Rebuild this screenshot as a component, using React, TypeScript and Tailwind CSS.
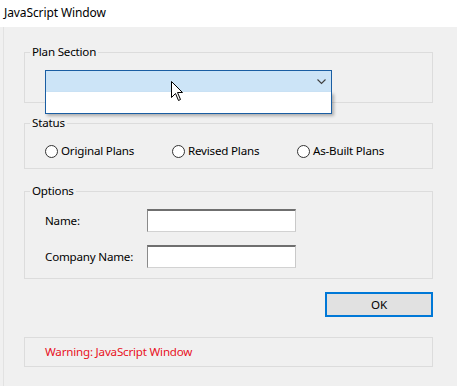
import React from "react";

const radios = [
  { label: "Original Plans", w: "w-[127px]" },
  { label: "Revised Plans", w: "w-[125px]" },
  { label: "As-Built Plans", w: "w-[120px]" },
];

function Radio({ label, w }: { label: string; w: string }) {
  return (
    <label className={`flex items-center ${w}`}>
      <span className="w-[13px] h-[13px] rounded-full border border-[#333333] bg-white" />
      <span className="ml-[3px] leading-[16px]">{label}</span>
    </label>
  );
}

function TextBox() {
  return (
    <div className="w-[149px] h-[23px] bg-white border border-t-2 border-t-[#6f6f6f] border-l-[#8a8a8a] border-r-[#c9c9c9] border-b-[#d2d2d2]" />
  );
}

export default function App() {
  return (
    <div className="relative w-[457px] h-[386px] overflow-hidden bg-[#f0f0f0] font-['Noto_Sans',sans-serif] text-[11.6px] tracking-[-0.2px] text-black">
      <div className="h-[27px] bg-white pl-[4px] leading-[26px] text-[12px] tracking-[-0.1px]">JavaScript Window</div>

      <div className="ml-[3px] border-l border-[#e2e2e2] h-[359px] pl-[20px] pr-[24px] pt-[17px]">
        {/* Plan Section */}
        <fieldset className="border border-[#dcdcdc] pl-[5px] pt-[10px] pb-[8px]">
          <legend className="px-[2px] leading-[16px]">Plan Section</legend>
          <div className="relative ml-[15px] w-[287px] h-[24px] bg-[#cce4f7] border border-[#1a5ea3] border-b-2 flex items-center justify-end pr-[5px]">
            <svg width="9" height="6" viewBox="0 0 9 6" className="mt-[1px]">
              <polyline points="0.5,0.5 4.5,4.5 8.5,0.5" fill="none" stroke="#404040" strokeWidth="1.1" />
            </svg>
            <div className="absolute left-[-1px] right-[-1px] top-full h-[22px] bg-white border border-t-0 border-[#1a5ea3] shadow-[2px_2px_3px_rgba(0,0,0,0.28)] z-10" />
          </div>
        </fieldset>

        {/* Status */}
        <fieldset className="mt-[12px] border border-[#dcdcdc] pl-[5px] pt-[12px] pb-[9px]">
          <legend className="px-[2px] leading-[16px]">Status</legend>
          <div className="ml-[15px] flex">
            {radios.map((r) => (
              <Radio key={r.label} label={r.label} w={r.w} />
            ))}
          </div>
        </fieldset>

        {/* Options */}
        <fieldset className="mt-[14px] border border-[#dcdcdc] pl-[5px] pt-[10px] pb-[10px]">
          <legend className="px-[2px] leading-[16px]">Options</legend>
          <div className="ml-[15px] flex flex-col gap-[13px]">
            <div className="flex items-center">
              <span className="w-[102px]">Name:</span>
              <TextBox />
            </div>
            <div className="flex items-center">
              <span className="w-[102px]">Company Name:</span>
              <TextBox />
            </div>
          </div>
        </fieldset>

        <div className="mt-[13px] flex justify-end">
          <button className="w-[108px] h-[25px] bg-[#e1e1e1] border-2 border-[#0078d7] leading-[20px]">OK</button>
        </div>

        <div className="mt-[20px] h-[30px] border border-[#dcdcdc] pl-[20px] flex items-center text-[#e81123]">
          Warning: JavaScript Window
        </div>
      </div>

      {/* mouse cursor */}
      <svg
        className="absolute left-[171px] top-[81px] z-20"
        width="13"
        height="21"
        viewBox="0 0 13 21"
      >
        <path
          d="M0.5 0.5 L0.5 16.5 L4.5 12.5 L7.5 19.5 L9.5 18.5 L6.5 11.5 L11.5 11.5 Z"
          fill="white"
          stroke="black"
          strokeWidth="1"
          strokeLinejoin="miter"
        />
      </svg>
    </div>
  );
}
